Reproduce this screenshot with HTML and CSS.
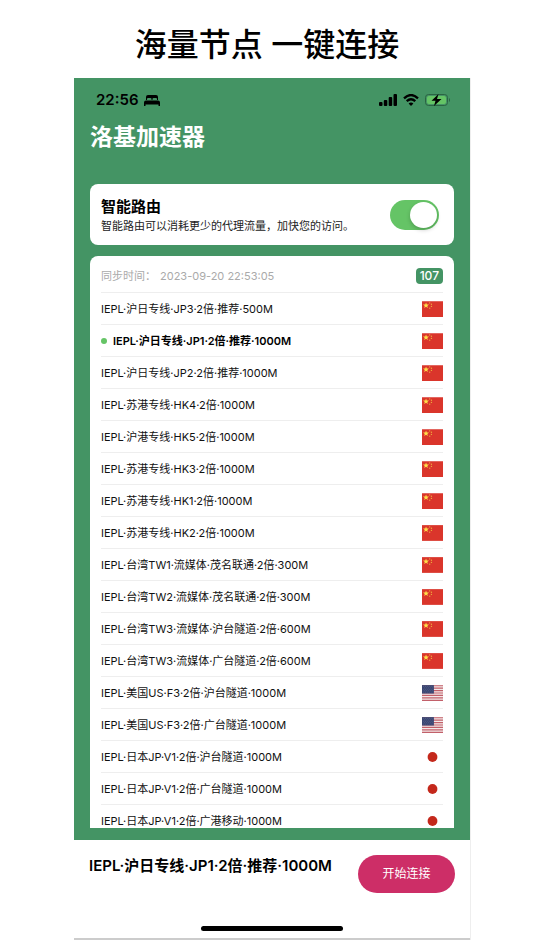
FILE: index.html
```html
<!DOCTYPE html>
<html lang="zh-CN">
<head>
<meta charset="utf-8">
<meta name="viewport" content="width=device-width, initial-scale=1">
<title>洛基加速器</title>
<link rel="stylesheet" href="styles.css">
</head>
<body>
<svg class="defs" aria-hidden="true">
  <symbol id="cn" viewBox="0 0 60 45">
    <path fill="#da352b" d="M0 0h60v45H0z"/>
    <path fill="#ffe14a" d="M11.500 4l2.200 5.800h6.300l-5 3.800 1.900 6-5.400-3.600-5.400 3.600 1.900-6-5-3.800h6.300z"/>
    <g fill="#eda63b"><circle cx="22" cy="5" r="2"/><circle cx="27" cy="9" r="2"/><circle cx="27" cy="15" r="2"/><circle cx="22" cy="20" r="2"/></g>
  </symbol>
  <symbol id="us" viewBox="0 0 60 45">
    <path fill="#f3e9e9" d="M0 0h60v45H0z"/>
    <path stroke="#c2606a" stroke-width="3.400" d="M0 1.700h60M0 8.600h60M0 15.500h60M0 22.500h60M0 29.400h60M0 36.300h60M0 43.300h60"/>
    <path fill="#3a4672" d="M0 0h34v24H0z"/>
    <path stroke="#7882a5" stroke-width="1.600" stroke-dasharray="1.600 4" d="M3 4h29M6 8h26M3 12h29M6 16h26M3 20h29"/>
  </symbol>
  <symbol id="jp" viewBox="0 0 60 45">
    <path fill="#fff" d="M0 0h60v45H0z"/>
    <circle cx="30" cy="22.500" r="14" fill="#c4281b"/>
  </symbol>
</svg>
<h1 class="headline">海量节点 一键连接</h1>
<main class="phone">
  <div class="app">
    <div class="status">
      <span class="time">22:56</span>
      <svg class="bed" viewBox="0 0 16 11" aria-hidden="true"><path d="M2 5V2Q2 0 4 0h8q2 0 2 2v3h-1V4q0-1-1-1H9.500q-1 0-1 1v1h-1V4q0-1-1-1H4Q3 3 3 4v1zM2 5.600h12q2 0 2 2V11h-1.500V9.500h-13V11H0V7.600q0-2 2-2z"/></svg>
      <svg class="signal" viewBox="0 0 18 12" aria-hidden="true"><rect y="8" width="3.500" height="4" rx="1"/><rect x="4.800" y="6" width="3.500" height="6" rx="1"/><rect x="9.700" y="3" width="3.500" height="9" rx="1"/><rect x="14.500" width="3.500" height="12" rx="1"/></svg>
      <svg class="wifi" viewBox="0 0 16 12" aria-hidden="true"><g fill="none" stroke="#000" stroke-width="2.300"><path d="M1 4.300q7-6.500 14 0M3.700 7.200q4.300-3.800 8.600 0"/></g><path d="M8 12L5.600 9.400q2.400-2 4.800 0z"/></svg>
      <svg class="battery" viewBox="0 0 25 12" aria-hidden="true"><rect x=".5" y=".5" width="22" height="11" rx="3" fill="none" stroke="#2b6343"/><rect x="2" y="2" width="19" height="8" rx="2" fill="#65c466"/><path d="M24 4q1 .5 1 2t-1 2z" fill="#2b6343"/><path d="M13.500 0L6.500 6.800h4L9 12l7.500-7h-4.500z"/></svg>
    </div>
    <h2 class="brand">洛基加速器</h2>
    <section class="card route">
      <div>
        <label class="route-title" for="route">智能路由</label>
        <p class="route-text">智能路由可以消耗更少的代理流量，加快您的访问。</p>
      </div>
      <input class="switch" id="route" type="checkbox" role="switch" checked>
    </section>
    <section class="card servers">
      <header class="sync"><span>同步时间：</span><time class="stamp">2023-09-20 22:53:05</time><span class="count">107</span></header>
      <ul class="list">
        <li><button class="row" type="button">IEPL·沪日专线·JP3·2倍·推荐·500M<svg class="flag"><use href="#cn"/></svg></button></li>
        <li><button class="row active" type="button">IEPL·沪日专线·JP1·2倍·推荐·1000M<svg class="flag"><use href="#cn"/></svg></button></li>
        <li><button class="row" type="button">IEPL·沪日专线·JP2·2倍·推荐·1000M<svg class="flag"><use href="#cn"/></svg></button></li>
        <li><button class="row" type="button">IEPL·苏港专线·HK4·2倍·1000M<svg class="flag"><use href="#cn"/></svg></button></li>
        <li><button class="row" type="button">IEPL·沪港专线·HK5·2倍·1000M<svg class="flag"><use href="#cn"/></svg></button></li>
        <li><button class="row" type="button">IEPL·苏港专线·HK3·2倍·1000M<svg class="flag"><use href="#cn"/></svg></button></li>
        <li><button class="row" type="button">IEPL·苏港专线·HK1·2倍·1000M<svg class="flag"><use href="#cn"/></svg></button></li>
        <li><button class="row" type="button">IEPL·苏港专线·HK2·2倍·1000M<svg class="flag"><use href="#cn"/></svg></button></li>
        <li><button class="row" type="button">IEPL·台湾TW1·流媒体·茂名联通·2倍·300M<svg class="flag"><use href="#cn"/></svg></button></li>
        <li><button class="row" type="button">IEPL·台湾TW2·流媒体·茂名联通·2倍·300M<svg class="flag"><use href="#cn"/></svg></button></li>
        <li><button class="row" type="button">IEPL·台湾TW3·流媒体·沪台隧道·2倍·600M<svg class="flag"><use href="#cn"/></svg></button></li>
        <li><button class="row" type="button">IEPL·台湾TW3·流媒体·广台隧道·2倍·600M<svg class="flag"><use href="#cn"/></svg></button></li>
        <li><button class="row" type="button">IEPL·美国US·F3·2倍·沪台隧道·1000M<svg class="flag"><use href="#us"/></svg></button></li>
        <li><button class="row" type="button">IEPL·美国US·F3·2倍·广台隧道·1000M<svg class="flag"><use href="#us"/></svg></button></li>
        <li><button class="row" type="button">IEPL·日本JP·V1·2倍·沪台隧道·1000M<svg class="flag"><use href="#jp"/></svg></button></li>
        <li><button class="row" type="button">IEPL·日本JP·V1·2倍·广台隧道·1000M<svg class="flag"><use href="#jp"/></svg></button></li>
        <li><button class="row" type="button">IEPL·日本JP·V1·2倍·广港移动·1000M<svg class="flag"><use href="#jp"/></svg></button></li>
      </ul>
    </section>
  </div>
  <footer class="dock">
    <div class="connect"><strong class="current">IEPL·沪日专线·JP1·2倍·推荐·1000M</strong><button class="start" type="button">开始连接</button></div>
    <div class="home"></div>
  </footer>
</main>
</body>
</html>
```
FILE: styles.css
```css
* { box-sizing: border-box; }

body {
  display: flex;
  flex-direction: column;
  height: 100vh;
  margin: 0;
  padding-bottom: 10px;
  background: #fff;
  color: #000;
  font: 11px/16px Inter, "Noto Sans CJK SC", sans-serif;
}

button { border: 0; font: inherit; cursor: pointer; }

.defs { position: absolute; width: 0; height: 0; }

.headline {
  margin: 0;
  padding: 21px 0 9px;
  font-size: 32px;
  font-weight: 500;
  line-height: 48px;
  text-align: center;
  white-space: nowrap;
}

.phone {
  display: flex;
  flex: 1;
  flex-direction: column;
  min-height: 0;
  margin: 0 64px 0 74px;
  border-bottom: 2px solid #ccc;
  box-shadow: 1px 0 0 #eee;
}

.app {
  display: flex;
  flex: 1;
  flex-direction: column;
  min-height: 0;
  padding: 12px 16px;
  background: #449464;
}

.status { display: flex; align-items: center; height: 20px; padding: 0 4px 0 6px; }
.time { font-size: 15px; font-weight: 600; }
.bed { width: 16px; height: 11px; margin-left: 5px; }
.signal { width: 18px; height: 12px; margin-left: auto; }
.wifi { width: 16px; height: 12px; margin: 0 6px; }
.battery { width: 25px; height: 12px; }

.brand {
  margin: 10px 0 30px;
  color: #fff;
  font-size: 23px;
  font-weight: 600;
  line-height: 34px;
}

.card { border-radius: 8px; background: #fff; }

.route {
  display: flex;
  align-items: center;
  justify-content: space-between;
  flex: none;
  margin-bottom: 11px;
  padding: 12px 15px 11px 11px;
}
.route-title { display: block; font-size: 15px; font-weight: 700; line-height: 22px; }
.route-text { margin: 0; color: #222; white-space: nowrap; }

.switch {
  flex: none;
  width: 49px;
  height: 30px;
  margin: 0;
  padding: 2px;
  appearance: none;
  border-radius: 15px;
  background: #ccc;
}
.switch::before {
  display: block;
  width: 27px;
  height: 26px;
  border-radius: 50%;
  background: #fff;
  box-shadow: 0 2px 4px #0003;
  content: "";
}
.switch:checked { background: #65c466; }
.switch:checked::before { margin-left: auto; }

.servers {
  flex: 1;
  min-height: 0;
  padding: 0 11px;
  overflow: hidden;
  border-radius: 8px 8px 0 0;
}
.sync {
  display: flex;
  align-items: center;
  height: 37px;
  padding-top: 3px;
  border-bottom: 1px solid #eee;
  color: #aaa;
}
.stamp { margin-left: 4px; }
.count {
  margin-left: auto;
  padding: 0 4px;
  border-radius: 4px;
  background: #449464;
  color: #fff;
  font-size: 12px;
  font-weight: 500;
}

.list { margin: 0; padding: 0; list-style: none; }
.row {
  display: flex;
  align-items: center;
  width: 100%;
  height: 32px;
  padding: 0;
  border-bottom: 1px solid #eee;
  background: none;
  color: #111;
  text-align: left;
  white-space: nowrap;
}
.active { color: #000; font-weight: 600; }
.active::before {
  width: 6px;
  height: 6px;
  margin-right: 6px;
  border-radius: 50%;
  background: #65c466;
  content: "";
}
.flag { flex: none; width: 21px; height: 16px; margin-left: auto; }

.dock { flex: none; padding: 15px 15px 7px; }
.connect { display: flex; align-items: flex-start; justify-content: space-between; }
.current { font-size: 15px; font-weight: 600; line-height: 22px; white-space: nowrap; }
.start {
  flex: none;
  width: 97px;
  height: 38px;
  padding: 0;
  border-radius: 19px;
  background: #cd2e67;
  color: #fff;
  font-size: 12px;
}
.home { width: 142px; height: 5px; margin: 33px auto 0; border-radius: 3px; background: #000; }
```
